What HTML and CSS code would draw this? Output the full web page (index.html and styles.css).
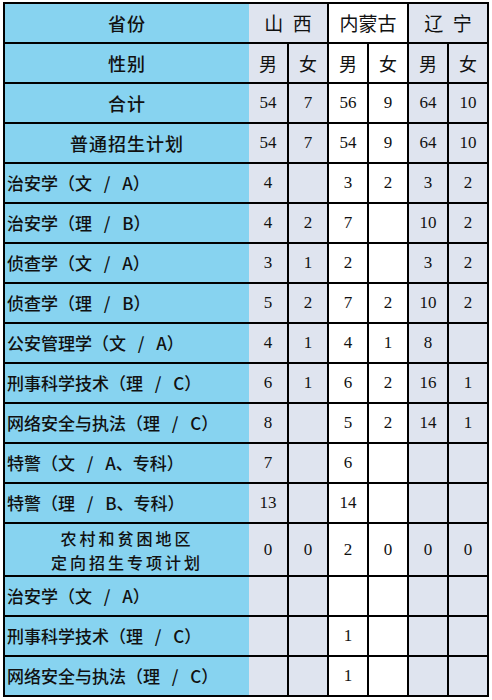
FILE: index.html
```html
<!DOCTYPE html>
<html lang="zh-CN">
<head>
<meta charset="utf-8">
<title>招生计划</title>
<link rel="stylesheet" href="styles.css">
</head>
<body>
<table class="plan">
  <colgroup>
    <col class="c-name">
    <col class="c-alt"><col class="c-alt">
    <col class="c-white"><col class="c-white">
    <col class="c-alt"><col class="c-alt">
  </colgroup>
  <tr>
    <td class="head">省份</td>
    <td class="prov" colspan="2">山&ensp;西</td>
    <td class="prov" colspan="2">内蒙古</td>
    <td class="prov" colspan="2">辽&ensp;宁</td>
  </tr>
  <tr>
    <td class="head">性别</td>
    <td class="sex">男</td><td class="sex">女</td>
    <td class="sex">男</td><td class="sex">女</td>
    <td class="sex">男</td><td class="sex">女</td>
  </tr>
  <tr>
    <td class="head">合计</td>
    <td>54</td><td>7</td><td>56</td><td>9</td><td>64</td><td>10</td>
  </tr>
  <tr>
    <td class="head">普通招生计划</td>
    <td>54</td><td>7</td><td>54</td><td>9</td><td>64</td><td>10</td>
  </tr>
  <tr>
    <td class="label">治安学（文 / A）</td>
    <td>4</td><td></td><td>3</td><td>2</td><td>3</td><td>2</td>
  </tr>
  <tr>
    <td class="label">治安学（理 / B）</td>
    <td>4</td><td>2</td><td>7</td><td></td><td>10</td><td>2</td>
  </tr>
  <tr>
    <td class="label">侦查学（文 / A）</td>
    <td>3</td><td>1</td><td>2</td><td></td><td>3</td><td>2</td>
  </tr>
  <tr>
    <td class="label">侦查学（理 / B）</td>
    <td>5</td><td>2</td><td>7</td><td>2</td><td>10</td><td>2</td>
  </tr>
  <tr>
    <td class="label">公安管理学（文 / A）</td>
    <td>4</td><td>1</td><td>4</td><td>1</td><td>8</td><td></td>
  </tr>
  <tr>
    <td class="label">刑事科学技术（理 / C）</td>
    <td>6</td><td>1</td><td>6</td><td>2</td><td>16</td><td>1</td>
  </tr>
  <tr>
    <td class="label">网络安全与执法（理 / C）</td>
    <td>8</td><td></td><td>5</td><td>2</td><td>14</td><td>1</td>
  </tr>
  <tr>
    <td class="label">特警（文 / A、专科）</td>
    <td>7</td><td></td><td>6</td><td></td><td></td><td></td>
  </tr>
  <tr>
    <td class="label">特警（理 / B、专科）</td>
    <td>13</td><td></td><td>14</td><td></td><td></td><td></td>
  </tr>
  <tr class="tall">
    <td class="head two"><span class="line">农村和贫困地区</span><span class="line">定向招生专项计划</span></td>
    <td>0</td><td>0</td><td>2</td><td>0</td><td>0</td><td>0</td>
  </tr>
  <tr>
    <td class="label">治安学（文 / A）</td>
    <td></td><td></td><td></td><td></td><td></td><td></td>
  </tr>
  <tr>
    <td class="label">刑事科学技术（理 / C）</td>
    <td></td><td></td><td>1</td><td></td><td></td><td></td>
  </tr>
  <tr>
    <td class="label">网络安全与执法（理 / C）</td>
    <td></td><td></td><td>1</td><td></td><td></td><td></td>
  </tr>
</table>
</body>
</html>
```

FILE: styles.css
```css
html, body {
  margin: 0;
  padding: 0;
  background: #ffffff;
}

body {
  width: 492px;
  height: 700px;
  overflow: hidden;
}

.plan {
  margin: 2px 0 0 3px;
  border-collapse: separate;
  border-spacing: 0;
  table-layout: fixed;
  width: 486px;
  border-top: 2px solid #000;
  border-left: 2px solid #000;
  color: #111;
  font-family: "Liberation Serif", "Times New Roman", serif;
  font-size: 17px;
}

.c-name { width: 244px; background: #87d3f0; }
.c-alt { width: 40px; background: #dfe4ef; }
.c-white { width: 40px; background: #ffffff; }

.plan tr { height: 40px; }
.plan tr.tall { height: 53px; }

.plan td {
  box-sizing: border-box;
  padding: 0;
  border-right: 2px solid #000;
  border-bottom: 2px solid #000;
  text-align: center;
  vertical-align: middle;
  line-height: 20px;
  white-space: nowrap;
}

.plan td:first-child {
  border-right: none;
}

.plan td.head {
  font-family: "Noto Sans CJK SC", sans-serif;
  font-weight: 500;
  font-size: 18px;
  letter-spacing: 1px;
}

.plan td.two {
  font-size: 16px;
  letter-spacing: 3px;
  padding-top: 1px;
}

.plan td.two .line {
  display: block;
  line-height: 24px;
}

.plan td.label {
  font-family: "Noto Sans CJK SC", sans-serif;
  font-weight: 500;
  font-size: 17px;
  text-align: left;
  padding-left: 2px;
  word-spacing: 8px;
}

.plan td.prov,
.plan td.sex {
  font-family: "Noto Sans CJK SC", sans-serif;
  font-weight: 400;
  font-size: 19px;
}

.plan td.sex {
  font-size: 18px;
}
```
